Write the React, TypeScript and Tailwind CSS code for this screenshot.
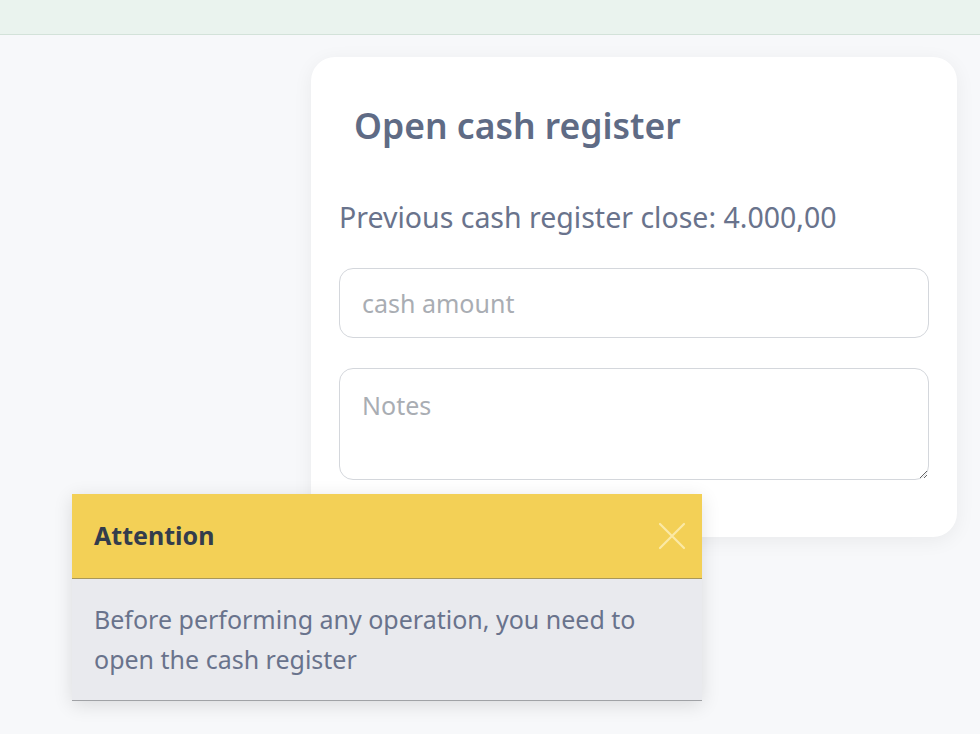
import React from "react"

const font = { fontFamily: '"Noto Sans", "Open Sans", sans-serif' }

const App: React.FC = () => {
    return (
        <div className="min-h-screen bg-[#f7f8fa] relative overflow-hidden" style={font}>
            <div className="h-[35px] bg-[#eaf3ee] border-b border-[#d3e2d9]"></div>

            <div className="pl-[311px] pt-[22px]">
                <div className="w-[646px] h-[480px] bg-white rounded-[24px] shadow-[0_4px_20px_rgba(0,0,0,0.06)] px-[28px] pt-[40px]">
                    <h1 className="pl-[15px] text-[35.5px] leading-[56px] font-semibold text-[#5f6b85]">Open cash register</h1>
                    <p className="mt-[44px] text-[28.5px] leading-[40px] text-[#69738c]">Previous cash register close: 4.000,00</p>
                    <div className="mt-[31px] space-y-[30px]">
                        <input
                            type="text"
                            placeholder="cash amount"
                            className="block w-[590px] h-[70px] px-[22px] rounded-[14px] border border-[#d4d7dc] text-[25px] text-[#555] placeholder:text-[#a9adb3] outline-none"
                        />
                        <textarea
                            placeholder="Notes"
                            className="block w-[590px] h-[112px] px-[22px] py-[17px] rounded-[14px] border border-[#d4d7dc] text-[25px] leading-[38px] text-[#555] placeholder:text-[#a9adb3] outline-none"
                        ></textarea>
                    </div>
                </div>
            </div>

            <div className="absolute left-[72px] top-[494px] w-[630px] shadow-[0_4px_18px_rgba(0,0,0,0.12)]">
                <div className="h-[85px] bg-[#f3d056] border-b border-[#a8975a] flex items-center justify-between pl-[22px] pr-[16px]">
                    <span className="text-[25px] font-bold text-[#333c4c]">Attention</span>
                    <svg width="28" height="28" viewBox="0 0 28 28" fill="none" stroke="#fbe9a6" strokeWidth="2.2" strokeLinecap="round">
                        <path d="M2 2L26 26M26 2L2 26" />
                    </svg>
                </div>
                <div className="h-[122px] bg-[#e9eaee] border-b border-[#a0a2a6] px-[22px] pt-[20px]">
                    <p className="text-[25px] leading-[40px] text-[#69738c]">
                        Before performing any operation, you need to
                        <br />
                        open the cash register
                    </p>
                </div>
            </div>
        </div>
    )
}

export default App
